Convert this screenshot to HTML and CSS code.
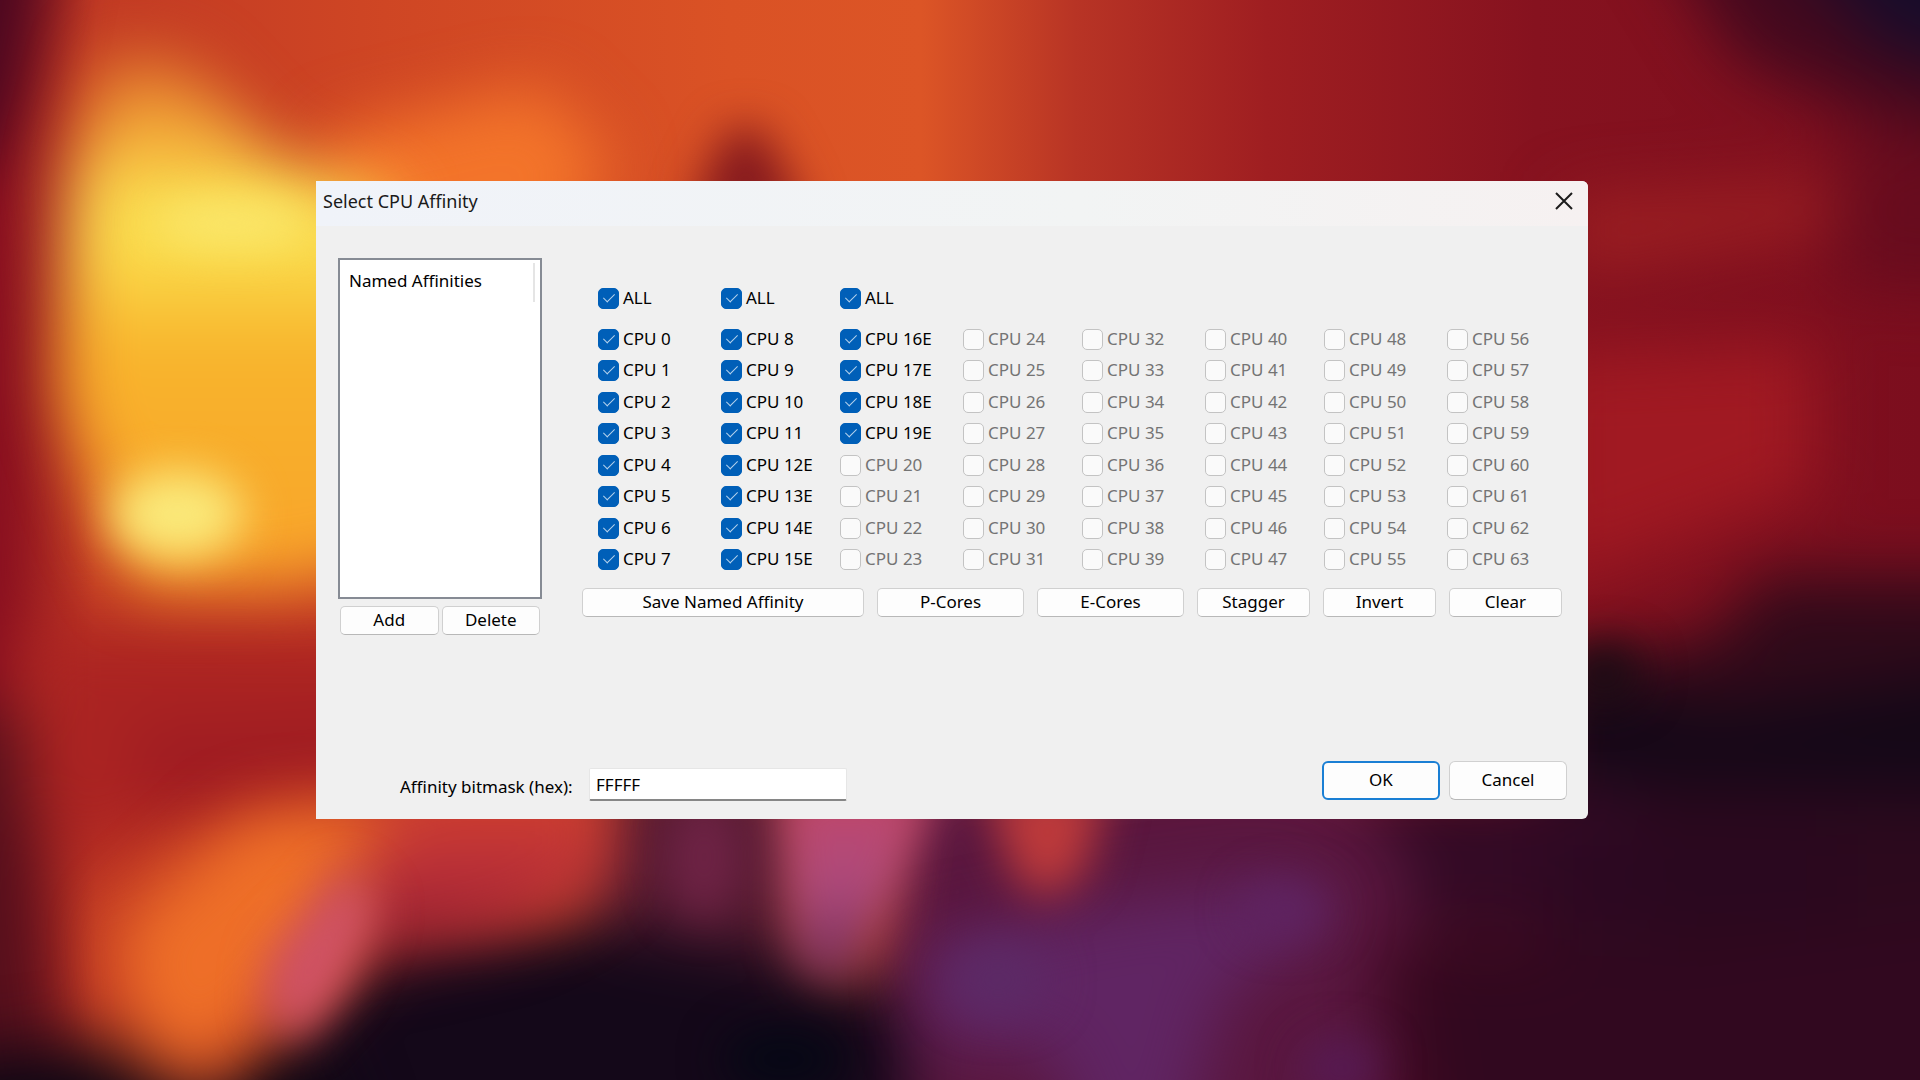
FILE: index.html
```
<!DOCTYPE html>
<html lang="en">
<head>
<meta charset="utf-8">
<meta name="viewport" content="width=device-width, initial-scale=1">
<title>Select CPU Affinity</title>
<link rel="stylesheet" href="styles.css">
</head>
<body>
<svg class="wallpaper" viewBox="0 0 1568 882" preserveAspectRatio="none" color-interpolation-filters="sRGB" aria-hidden="true">
  <defs>
    <linearGradient id="base" x1="0" y1="0" x2="1" y2="0">
      <stop offset="0" stop-color="#8e1420"/>
      <stop offset=".05" stop-color="#c23a24"/>
      <stop offset=".2" stop-color="#cf4624"/>
      <stop offset=".38" stop-color="#da5225"/>
      <stop offset=".48" stop-color="#dc5526"/>
      <stop offset=".56" stop-color="#b83425"/>
      <stop offset=".66" stop-color="#9f1e21"/>
      <stop offset=".8" stop-color="#86121f"/>
      <stop offset="1" stop-color="#7c0e1e"/>
    </linearGradient>
    <linearGradient id="flame" x1="0" y1="0" x2="0" y2="1">
      <stop offset="0" stop-color="#d9642a"/>
      <stop offset=".14" stop-color="#f2a435"/>
      <stop offset=".3" stop-color="#fbe453"/>
      <stop offset=".42" stop-color="#fad445"/>
      <stop offset=".55" stop-color="#f8b42c"/>
      <stop offset="1" stop-color="#f9a42b"/>
    </linearGradient>
    <linearGradient id="ember" x1="0" y1="0" x2="0" y2="1">
      <stop offset="0" stop-color="#d2432a"/>
      <stop offset=".4" stop-color="#c23538"/>
      <stop offset=".75" stop-color="#a32436"/>
      <stop offset="1" stop-color="#5c1124"/>
    </linearGradient>
    <linearGradient id="rose" x1="0" y1="0" x2="0" y2="1">
      <stop offset="0" stop-color="#c2476a"/>
      <stop offset=".5" stop-color="#ad4a7c"/>
      <stop offset="1" stop-color="#6b2a52"/>
    </linearGradient>
    <filter id="soft" x="-150%" y="-150%" width="400%" height="400%"><feGaussianBlur stdDeviation="18"/></filter>
    <filter id="softer" x="-50%" y="-50%" width="200%" height="200%"><feGaussianBlur stdDeviation="26"/></filter>
  </defs>
  <rect width="1568" height="882" fill="url(#base)"/>
  <g filter="url(#softer)">
    <path d="M-80 -80H50L20 70L-10 140H-80Z" fill="#4a0820"/>
    <path d="M-80 140H-5L15 300L0 560H-80Z" fill="#8a1020"/>
    <path d="M-80 580H20L35 760L60 960H-80Z" fill="#55101c"/>
    <path d="M20 510H330V680H110L60 720L20 640Z" fill="#ab2422"/>
    <path d="M100 590L300 580V630L120 670Z" fill="#9f1c22"/>
    <path d="M1340 -80H1660V120L1540 100L1420 50Z" fill="#43091e"/>
    <path d="M1430 -80H1660V65L1540 40Z" fill="#180c2a"/>
    <path d="M1280 165L1500 150L1500 185L1280 220Z" fill="#9e2022"/>
    <path d="M1500 110H1660V240L1500 235Z" fill="#680c1e"/>
    <path d="M1260 290L1480 280L1480 400L1260 480Z" fill="#a01922"/>
    <path d="M1260 540L1400 520L1440 470L1660 470V960H1260Z" fill="#300a1a"/>
    <path d="M1260 550L1400 580L1660 540V660L1260 640Z" fill="#140817"/>
    <path d="M1050 640H1330L1350 760H1100Z" fill="#420d2d"/>
    <path d="M1260 690H1500V740H1260Z" fill="#290722"/>
    <path d="M730 620H1080L1160 730L1120 960H700Z" fill="#5a173f"/>
    <path d="M1120 770L1350 780L1660 740V960H1140Z" fill="#3c0820"/>
    <path d="M1140 640H1660V960H1180Z" fill="#2a0820" opacity=".6"/>
    <path d="M480 620H660V960H480Z" fill="#541a30"/>
    <path d="M230 850L320 760L460 750L690 790L740 820L740 960H200Z" fill="#140819"/>
    <path d="M270 110L440 70L500 130L440 240H250Z" fill="#f3742a"/>
  </g>
  <g filter="url(#softer)">
    <path d="M85 40L150 50L220 125L320 165V460L230 480L110 480L75 400L50 320L60 140Z" fill="url(#flame)"/>
    <path d="M95 760L150 710L200 665L330 650L290 740L215 830L160 880L110 840Z" fill="#ee6f28"/>
    <path d="M330 630H500L500 715L420 760L290 790L280 730Z" fill="url(#ember)"/>
    <path d="M750 770L900 740L1040 720L1090 750L1000 810L960 960H890L860 860L760 850Z" fill="#602563"/>
    <path d="M-80 870L80 850L160 900L260 850L300 960H-80Z" fill="#0d0714"/>
  </g>
  <g filter="url(#soft)">
    <ellipse cx="145" cy="420" rx="54" ry="36" fill="#fae97a"/>
    <ellipse cx="190" cy="182" rx="66" ry="20" fill="#fae76c"/>
    <path d="M595 105H622L660 180H560Z" fill="#84191e"/>
    <ellipse cx="609" cy="145" rx="34" ry="22" fill="#84191e"/>
    <ellipse cx="575" cy="700" rx="32" ry="50" fill="#6e2345"/>
    <path d="M280 710L310 740L280 810L245 850L215 830L220 780Z" fill="#cf5265"/>
    <path d="M635 640H768L730 730L690 805L650 790Z" fill="url(#rose)"/>
    <path d="M805 640H905L885 715L850 735L825 710Z" fill="#bd3a3b"/>
    <ellipse cx="1050" cy="742" rx="36" ry="22" fill="#5f2463"/>
    <ellipse cx="815" cy="800" rx="42" ry="30" fill="#5c2a66"/>
    <ellipse cx="1095" cy="872" rx="32" ry="22" fill="#561b56"/>
    <ellipse cx="640" cy="865" rx="50" ry="24" fill="#050815"/>
    <ellipse cx="1310" cy="550" rx="30" ry="24" fill="#190c14"/>
  </g>
</svg>

<main class="desktop">
  <form class="dialog" aria-labelledby="dialog-title">
    <header class="titlebar">
      <h1 class="title" id="dialog-title">Select CPU Affinity</h1>
      <button class="close" type="button" aria-label="Close">
        <svg viewBox="0 0 18 18" width="18" height="18"><path d="M1 1L17 17M17 1L1 17" stroke="#1c1c1c" stroke-width="2" fill="none"/></svg>
      </button>
    </header>

    <div class="content">
      <section class="named">
        <div class="list"><div class="list-head">Named Affinities</div></div>
        <div class="list-actions">
          <button class="btn" type="button">Add</button>
          <button class="btn" type="button">Delete</button>
        </div>
      </section>

      <section class="cores">
        <div class="grid" id="grid"></div>
        <div class="actions">
          <button class="btn" type="button">Save Named Affinity</button>
          <button class="btn" type="button">P-Cores</button>
          <button class="btn" type="button">E-Cores</button>
          <button class="btn" type="button">Stagger</button>
          <button class="btn" type="button">Invert</button>
          <button class="btn" type="button">Clear</button>
        </div>
      </section>
    </div>

    <footer class="footer">
      <label class="mask-label" for="mask">Affinity bitmask (hex):</label>
      <input class="mask" id="mask" type="text" value="FFFFF">
      <div class="confirm">
        <button class="btn btn-large btn-default" type="button">OK</button>
        <button class="btn btn-large" type="button">Cancel</button>
      </div>
    </footer>
  </form>
</main>
<script src="script.js"></script>
</body>
</html>
```
FILE: styles.css
```
* {
  box-sizing: border-box;
}

body {
  margin: 0;
  min-height: 100vh;
  background: #5c0e20;
  font-family: "Noto Sans", "Open Sans", sans-serif;
  font-size: 17px;
  line-height: 22px;
  color: #000;
}

.wallpaper {
  position: fixed;
  inset: 0;
  width: 100%;
  height: 100%;
  z-index: -1;
}

.desktop {
  padding: 181px 332px 200px 316px;
}

.dialog {
  min-width: 1160px;
  background: #f0f0f0;
  border-radius: 0 6px 6px 0;
  overflow: hidden;
}

.titlebar {
  display: flex;
  align-items: center;
  justify-content: space-between;
  height: 45px;
  padding: 0 14px 6px 7px;
  background: linear-gradient(90deg, #f0f3f9, #f2f4f4 60%, #f6f1f1);
}

.title {
  margin: 0;
  font-size: 18px;
  font-weight: 400;
  color: #1a1a1a;
}

.close {
  display: flex;
  padding: 1px;
  border: 0;
  background: none;
}

.content {
  display: flex;
  gap: 40px;
  padding: 32px 22px 0;
}

.named {
  flex: 0 0 204px;
}

.list {
  height: 341px;
  padding: 3px 5px;
  background: #fff;
  border: 2px solid #868b94;
}

.list-head {
  height: 39px;
  padding: 7px 4px;
  border-right: 2px solid #e5e5e5;
}

.list-actions {
  display: grid;
  grid-template-columns: 1fr 1fr;
  gap: 3px;
  padding: 7px 2px;
}

.btn {
  height: 29px;
  padding: 0 0 1px;
  border: 1px solid #d0d0d0;
  border-bottom-color: #b8b8b8;
  border-radius: 5px;
  background: #fdfdfd;
  color: #000;
  font: inherit;
  line-height: 22px;
}

.btn-large {
  width: 118px;
  height: 39px;
  border-radius: 6px;
}

.btn-default {
  border: 2px solid #1a7fd4;
}

.cores {
  flex: 1;
  padding: 29px 0 0;
}

.grid {
  display: grid;
  grid-template-columns: repeat(4, 123fr 119fr);
  grid-template-rows: 41px repeat(4, 31px 32px);
  grid-auto-flow: column;
  padding-left: 16px;
}

.core {
  display: flex;
  align-items: center;
  align-self: start;
  justify-self: start;
  gap: 4px;
  height: 22px;
}

.core-first {
  grid-row: 2;
}

.core-off {
  color: #747474;
}

.box {
  appearance: none;
  display: grid;
  place-items: center;
  width: 21px;
  height: 21px;
  margin: 0;
  border: 1px solid #c3c3c3;
  border-radius: 5px;
  background: #fafafa;
}

.box:checked {
  border-color: #005fb8;
  background: #005fb8;
}

.box:checked::before {
  content: "";
  width: 5px;
  height: 10px;
  margin-bottom: 4px;
  border: solid #b5d2ec;
  border-width: 0 1px 1px 0;
  transform: rotate(45deg);
}

.actions {
  display: grid;
  grid-template-columns: 282fr 147fr 147fr 113fr 113fr 113fr;
  gap: 13px;
  padding: 8px 4px 0 0;
}

.footer {
  display: flex;
  align-items: flex-start;
  padding: 119px 21px 18px 84px;
}

.mask-label {
  width: 189px;
  padding-top: 15px;
}

.mask {
  width: 258px;
  height: 33px;
  margin-top: 7px;
  padding: 0 6px;
  border: 1px solid #e6e6e6;
  border-bottom: 2px solid #868686;
  border-radius: 2px;
  background: #fff;
  font: inherit;
  color: #000;
}

.confirm {
  display: flex;
  gap: 9px;
  margin-left: auto;
}
```
FILE: script.js
```
const grid = document.getElementById("grid");
const ACTIVE = 20;
const P_CORES = 12;

function addBox(text, checked, enabled, first) {
  const label = document.createElement("label");
  label.className = "core" + (enabled ? "" : " core-off") + (first ? " core-first" : "");
  const box = document.createElement("input");
  box.type = "checkbox";
  box.className = "box";
  box.checked = checked;
  box.disabled = !enabled;
  label.append(box, text);
  grid.append(label);
}

for (let col = 0; col < 8; col++) {
  const hasAll = col * 8 < ACTIVE;
  if (hasAll) addBox("ALL", true, true, false);
  for (let row = 0; row < 8; row++) {
    const n = col * 8 + row;
    const on = n < ACTIVE;
    addBox("CPU " + n + (on && n >= P_CORES ? "E" : ""), on, on, !hasAll && row === 0);
  }
}
```
